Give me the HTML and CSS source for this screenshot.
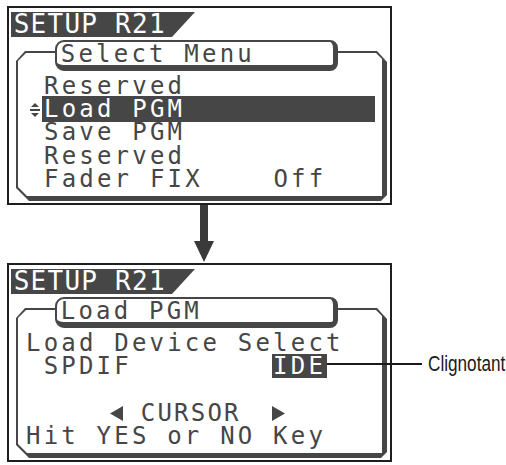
FILE: index.html
```html
<!DOCTYPE html>
<html lang="fr">
<head>
    <meta charset="UTF-8">
    <meta name="viewport" content="width=device-width, initial-scale=1.0">
    <title>SETUP R21 - Load PGM</title>
    <link rel="stylesheet" href="styles.css">
</head>
<body>
    <div class="sheet">
        <!-- first screen: the setup menu -->
        <section class="lcd">
            <div class="frame"><div class="frame-in"></div></div>
            <div class="screen">
                <div class="tab">SETUP R21</div>
                <div class="title">Select Menu</div>
                <ul class="menu">
                    <li><span class="mark"></span><span class="label">Reserved</span></li>
                    <li class="current">
                        <span class="mark">
                            <svg width="10" height="14" viewBox="0 0 10 14">
                                <polygon points="5,0 9,4 1,4"/>
                                <rect x="0" y="6" width="10" height="2"/>
                                <polygon points="1,10 9,10 5,14"/>
                            </svg>
                        </span>
                        <span class="label">Load PGM</span>
                    </li>
                    <li><span class="mark"></span><span class="label">Save PGM</span></li>
                    <li><span class="mark"></span><span class="label">Reserved</span></li>
                    <li><span class="mark"></span><span class="label">Fader FIX    Off</span></li>
                </ul>
            </div>
        </section>

        <div class="flow-arrow">
            <svg width="20" height="58" viewBox="0 0 20 58">
                <rect x="6" y="0" width="8" height="38"/>
                <polygon points="0,36 20,36 10,57"/>
            </svg>
        </div>

        <!-- second screen: device select -->
        <section class="lcd">
            <div class="frame"><div class="frame-in"></div></div>
            <div class="screen">
                <div class="tab">SETUP R21</div>
                <div class="title">Load PGM</div>
                <div class="lines">
                    <div class="line">Load Device Select</div>
                    <div class="line"> SPDIF        <span class="blink">IDE</span></div>
                    <div class="line"></div>
                    <div class="line cursor-row">
                        <svg class="tri-l" width="13" height="15" viewBox="0 0 13 15">
                            <polygon points="0,7.5 13,0 13,15"/>
                        </svg>
                        <span class="cur">CURSOR</span>
                        <svg class="tri-r" width="13" height="15" viewBox="0 0 13 15">
                            <polygon points="13,7.5 0,0 0,15"/>
                        </svg>
                    </div>
                    <div class="line">Hit YES or NO Key</div>
                </div>
            </div>
        </section>

        <div class="callout">
            <span class="callout-line"></span>
            <span class="callout-text">Clignotant</span>
        </div>
    </div>
</body>
</html>
```

FILE: styles.css
```css
html, body {
    margin: 0;
    overflow: hidden;
    background: #fff;
}
.sheet {
    position: relative;
    width: 506px;
    height: 465px;
    box-sizing: border-box;
    padding: 6px 0 0 7px;
}

/* lcd panel */
.lcd {
    display: grid;
    width: 385px;
    height: 199px;
    box-sizing: border-box;
    border: 2px solid #1e1e1e;
    background: #fff;
    font-family: "DejaVu Sans Mono", monospace;
    font-size: 24px;
    line-height: 23.4px;
    letter-spacing: 3.2px;
    color: #464646;
}
.frame {
    grid-area: 1 / 1;
    align-self: start;
    justify-self: start;
    margin: 43px 0 0 7px;
    width: 371px;
    height: 150px;
    box-sizing: border-box;
    padding: 2px 5px 5px 2px;
    background: #464646;
    clip-path: polygon(9px 0, calc(100% - 10px) 0, 100% 11px, 100% calc(100% - 6px), calc(100% - 6px) 100%, 13px 100%, 0 calc(100% - 13px), 0 10px);
}
.frame-in {
    height: 100%;
    background: #fff;
    clip-path: polygon(8px 0, calc(100% - 6px) 0, 100% 6px, 100% 100%, 9px 100%, 0 calc(100% - 9px), 0 8px);
}
.screen {
    grid-area: 1 / 1;
    position: relative;
    z-index: 1;
    padding: 4px 0 0 2px;
}
.tab {
    width: 184px;
    height: 25px;
    box-sizing: border-box;
    padding-left: 2.7px;
    background: #464646;
    clip-path: polygon(0 0, 100% 0, 161px 100%, 0 100%);
    color: #fff;
    font-size: 26px;
    line-height: 25px;
    letter-spacing: 1.25px;
    white-space: pre;
}
.title {
    width: 283px;
    height: 31px;
    margin: 3px 0 0 44px;
    box-sizing: border-box;
    border: solid #464646;
    border-width: 2px 5px 6px 2px;
    border-radius: 9px 8px 8px 9px;
    padding: 0.5px 0 0 3.8px;
    background: #fff;
    white-space: pre;
}

/* menu rows */
.menu {
    list-style: none;
    margin: 3.5px 15px 0 15px;
    padding: 0;
}
.menu li {
    display: flex;
    height: 23.4px;
}
.mark {
    flex: none;
    width: 16px;
}
.mark svg {
    display: block;
    margin: 5px 0 0 4px;
    fill: #464646;
}
.label {
    flex: 1;
    padding-left: 2px;
    white-space: pre;
}
.current .label {
    background: #464646;
    color: #fff;
    box-shadow: 0 -2px 0 #464646, 0 1px 0 #464646;
}

/* text lines */
.lines {
    margin: 3.5px 0 0 15px;
}
.line {
    height: 23.4px;
    white-space: pre;
}
.blink {
    display: inline-block;
    vertical-align: top;
    height: 24px;
    margin: -1px 0 0 -1px;
    padding: 1px 1px 0 1px;
    box-sizing: border-box;
    background: #464646;
    color: #fff;
}
.cursor-row {
    display: flex;
    align-items: flex-start;
}
.cursor-row svg {
    flex: none;
    fill: #464646;
}
.tri-l { margin: 4px 0 0 84px; }
.cur {
    margin-left: 17.8px;
    letter-spacing: 2.2px;
}
.tri-r { margin: 4px 0 0 31px; }

/* arrow between the two screens */
.flow-arrow {
    height: 58px;
    padding-left: 187px;
}
.flow-arrow svg {
    display: block;
    fill: #3a3a3a;
}

/* callout label */
.callout {
    position: absolute;
    left: 327px;
    top: 353px;
    display: flex;
    align-items: center;
    height: 22px;
}
.callout-line {
    width: 95px;
    height: 2px;
    background: #1a1a1a;
}
.callout-text {
    margin-left: 6px;
    font-family: "Liberation Sans", Arial, sans-serif;
    font-size: 22px;
    line-height: 22px;
    color: #1a1a1a;
    white-space: nowrap;
    transform: scaleX(0.78);
    transform-origin: left center;
}
```
